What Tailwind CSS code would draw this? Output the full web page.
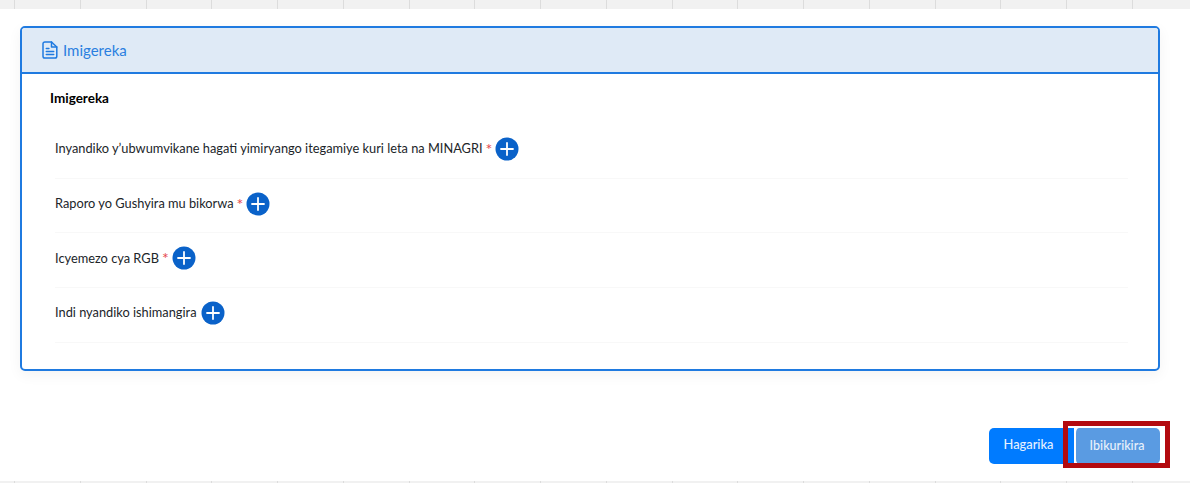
<!DOCTYPE html>
<html>
<head>
<meta charset="utf-8">
<script src="https://cdn.jsdelivr.net/npm/@tailwindcss/browser@4"></script>
</head>
<body class="bg-white">
<div class="relative h-[483px] w-[1190px] overflow-hidden bg-white font-['Lato','Noto_Sans',sans-serif] text-[#212529]">
  <div class="flex h-[9px] bg-[#f1f1f1] pl-[14px]">
    <div class="h-full w-[65.75px] shrink-0 border-l border-[#dcdcdc]"></div>
    <div class="h-full w-[65.75px] shrink-0 border-l border-[#dcdcdc]"></div>
    <div class="h-full w-[65.75px] shrink-0 border-l border-[#dcdcdc]"></div>
    <div class="h-full w-[65.75px] shrink-0 border-l border-[#dcdcdc]"></div>
    <div class="h-full w-[65.75px] shrink-0 border-l border-[#dcdcdc]"></div>
    <div class="h-full w-[65.75px] shrink-0 border-l border-[#dcdcdc]"></div>
    <div class="h-full w-[65.75px] shrink-0 border-l border-[#dcdcdc]"></div>
    <div class="h-full w-[65.75px] shrink-0 border-l border-[#dcdcdc]"></div>
    <div class="h-full w-[65.75px] shrink-0 border-l border-[#dcdcdc]"></div>
    <div class="h-full w-[65.75px] shrink-0 border-l border-[#dcdcdc]"></div>
    <div class="h-full w-[65.75px] shrink-0 border-l border-[#dcdcdc]"></div>
    <div class="h-full w-[65.75px] shrink-0 border-l border-[#dcdcdc]"></div>
    <div class="h-full w-[65.75px] shrink-0 border-l border-[#dcdcdc]"></div>
    <div class="h-full w-[65.75px] shrink-0 border-l border-[#dcdcdc]"></div>
    <div class="h-full w-[65.75px] shrink-0 border-l border-[#dcdcdc]"></div>
    <div class="h-full w-[65.75px] shrink-0 border-l border-[#dcdcdc]"></div>
    <div class="h-full w-[65.75px] shrink-0 border-l border-[#dcdcdc]"></div>
    <div class="h-full w-[65.75px] shrink-0 border-l border-[#dcdcdc]"></div>
  </div>

  <section class="mx-[20px] mt-[17px] h-[345px] w-[1140px] overflow-hidden rounded-[5px] border-2 border-[#1f7ae0] bg-white shadow-[0_4px_14px_rgba(0,0,0,0.05)]">
    <header class="flex h-[46px] items-center gap-[5px] border-b-2 border-[#1f7ae0] bg-[#dfeaf6] pl-[20px] text-[#2a7fe0]">
      <svg class="h-[18px] w-[16px]" viewBox="0 0 16 18" fill="none" stroke="#1f7ae0" stroke-width="1.5" stroke-linejoin="round" stroke-linecap="round">
        <path d="M2.8 1h6.7L14.8 6v9.2a1.8 1.8 0 0 1-1.8 1.8H2.8A1.8 1.8 0 0 1 1 15.2V2.8A1.8 1.8 0 0 1 2.8 1Z"/>
        <path d="M9.5 1v5h5.3"/>
        <path d="M4.3 7.5h2.6M4.3 10.5h7.4M4.3 13.5h7.4"/>
      </svg>
      <span class="text-[15px] leading-none">Imigereka</span>
    </header>
    <div class="pl-[28px] pr-[30px] pt-[15px]">
      <h2 class="text-[13.5px] font-bold leading-[18px] text-black">Imigereka</h2>
      <div class="mt-[17px] pl-[5px]">
        <div class="flex h-[54.7px] items-center border-b border-[#f8f8f8] pb-[4px] text-[12.8px]">
          <span>Inyandiko y’ubwumvikane hagati yimiryango itegamiye kuri leta na MINAGRI</span>
          <span class="ml-[3px] text-[16px] text-[#e5484d]">*</span>
          <svg class="ml-[3px] h-[24px] w-[24px]" viewBox="0 0 24 24"><circle cx="12" cy="12" r="11.5" fill="#0a62c9"/><path d="M12 6v12M6 12h12" stroke="#fff" stroke-width="1.8" stroke-linecap="round"/></svg>
        </div>
        <div class="flex h-[54.7px] items-center border-b border-[#f8f8f8] pb-[4px] text-[12.8px]">
          <span>Raporo yo Gushyira mu bikorwa</span>
          <span class="ml-[3px] text-[16px] text-[#e5484d]">*</span>
          <svg class="ml-[3px] h-[24px] w-[24px]" viewBox="0 0 24 24"><circle cx="12" cy="12" r="11.5" fill="#0a62c9"/><path d="M12 6v12M6 12h12" stroke="#fff" stroke-width="1.8" stroke-linecap="round"/></svg>
        </div>
        <div class="flex h-[54.7px] items-center border-b border-[#f8f8f8] pb-[4px] text-[12.8px]">
          <span>Icyemezo cya RGB</span>
          <span class="ml-[3px] text-[16px] text-[#e5484d]">*</span>
          <svg class="ml-[3px] h-[24px] w-[24px]" viewBox="0 0 24 24"><circle cx="12" cy="12" r="11.5" fill="#0a62c9"/><path d="M12 6v12M6 12h12" stroke="#fff" stroke-width="1.8" stroke-linecap="round"/></svg>
        </div>
        <div class="flex h-[54.7px] items-center border-b border-[#f8f8f8] pb-[4px] text-[12.8px]">
          <span>Indi nyandiko ishimangira</span>
          <svg class="ml-[4px] h-[24px] w-[24px]" viewBox="0 0 24 24"><circle cx="12" cy="12" r="11.5" fill="#0a62c9"/><path d="M12 6v12M6 12h12" stroke="#fff" stroke-width="1.8" stroke-linecap="round"/></svg>
        </div>
      </div>
    </div>
  </section>

  <div class="mr-[30px] mt-[57px] flex justify-end">
    <button class="h-[36px] w-[85px] rounded-l-[5px] bg-[#007bff] pb-[2px] pr-[6px] text-[12.8px] font-medium text-[#e6f1ff]">Hagarika</button>
    <button class="h-[36px] w-[86px] rounded-[5px] border-l-2 border-white bg-[#5a9be2] pr-[2px] text-[12.5px] font-medium text-[#e8f1fb]">Ibikurikira</button>
  </div>

  <div class="absolute left-[1063px] top-[421px] h-[47px] w-[107px] border-[5px] border-[#b30a0f]"></div>

  <div class="absolute bottom-0 left-0 flex h-[2px] w-full bg-[#f1f1f1] pl-[14px]">
    <div class="h-full w-[65.75px] shrink-0 border-l border-[#dcdcdc]"></div>
    <div class="h-full w-[65.75px] shrink-0 border-l border-[#dcdcdc]"></div>
    <div class="h-full w-[65.75px] shrink-0 border-l border-[#dcdcdc]"></div>
    <div class="h-full w-[65.75px] shrink-0 border-l border-[#dcdcdc]"></div>
    <div class="h-full w-[65.75px] shrink-0 border-l border-[#dcdcdc]"></div>
    <div class="h-full w-[65.75px] shrink-0 border-l border-[#dcdcdc]"></div>
    <div class="h-full w-[65.75px] shrink-0 border-l border-[#dcdcdc]"></div>
    <div class="h-full w-[65.75px] shrink-0 border-l border-[#dcdcdc]"></div>
    <div class="h-full w-[65.75px] shrink-0 border-l border-[#dcdcdc]"></div>
    <div class="h-full w-[65.75px] shrink-0 border-l border-[#dcdcdc]"></div>
    <div class="h-full w-[65.75px] shrink-0 border-l border-[#dcdcdc]"></div>
    <div class="h-full w-[65.75px] shrink-0 border-l border-[#dcdcdc]"></div>
    <div class="h-full w-[65.75px] shrink-0 border-l border-[#dcdcdc]"></div>
    <div class="h-full w-[65.75px] shrink-0 border-l border-[#dcdcdc]"></div>
    <div class="h-full w-[65.75px] shrink-0 border-l border-[#dcdcdc]"></div>
    <div class="h-full w-[65.75px] shrink-0 border-l border-[#dcdcdc]"></div>
    <div class="h-full w-[65.75px] shrink-0 border-l border-[#dcdcdc]"></div>
    <div class="h-full w-[65.75px] shrink-0 border-l border-[#dcdcdc]"></div>
  </div>
</div>
</body>
</html>
